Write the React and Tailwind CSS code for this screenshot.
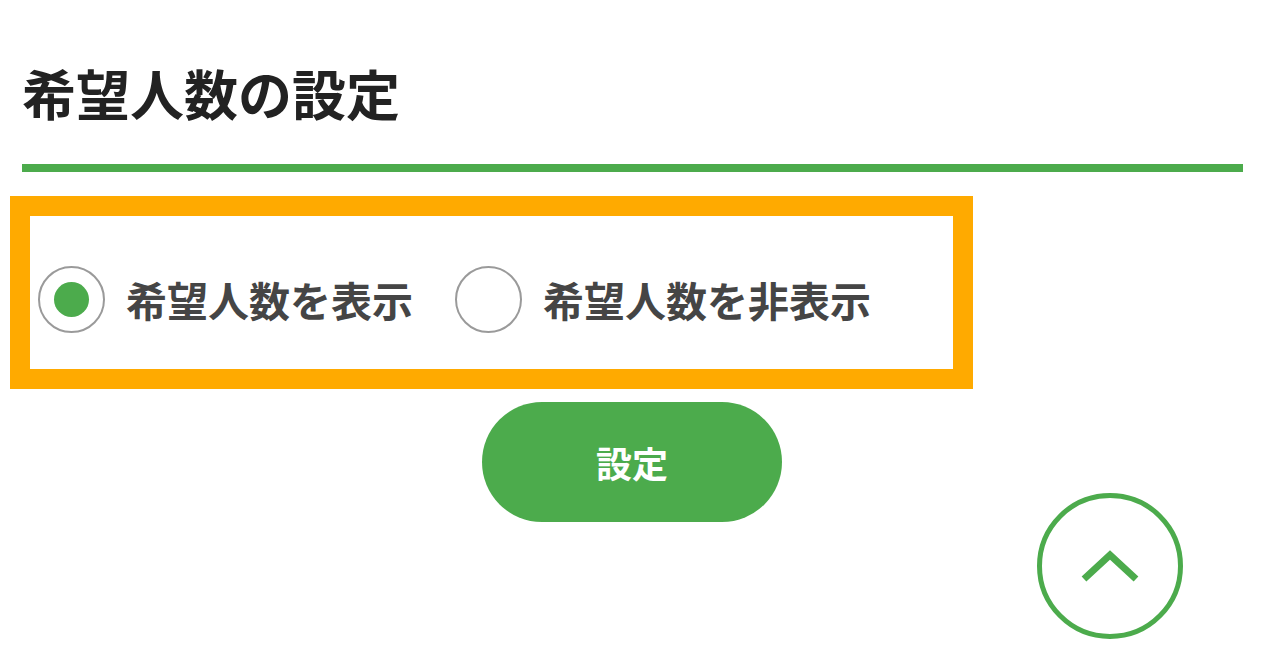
import React, { useState } from 'react';

const Radio = ({ checked, label, onClick }) => (
  <label onClick={onClick} className="flex items-center gap-[21px] cursor-pointer">
    <span className="w-[67px] h-[67px] rounded-full border-2 border-[#9a9a9a] bg-white flex items-center justify-center">
      {checked && <span className="w-[35px] h-[35px] rounded-full bg-[#4cab4c]" />}
    </span>
    <span className="text-[41px] font-bold leading-none text-[#454545]">{label}</span>
  </label>
);

const App = () => {
  const [show, setShow] = useState(true);

  return (
    <div className="relative w-[1264px] h-[668px] bg-white overflow-hidden font-['Noto_Sans_CJK_JP','Noto_Sans',sans-serif]">
      {/* heading */}
      <div className="pl-[22px] pr-[21px] pt-[66px]">
        <h1 className="text-[54px] font-bold leading-none text-[#222]">希望人数の設定</h1>
        <div className="mt-[44px] h-[8px] bg-[#4cab4c]" />
      </div>

      {/* radio group */}
      <div className="ml-[10px] mt-[24px] w-[963px] h-[193px] border-[20px] border-[#ffaa00] flex items-center gap-[42px] pl-[8px] pt-[13px]">
        <Radio checked={show} label="希望人数を表示" onClick={() => setShow(true)} />
        <Radio checked={!show} label="希望人数を非表示" onClick={() => setShow(false)} />
      </div>

      {/* submit */}
      <div className="flex justify-center mt-[13px]">
        <button className="w-[300px] h-[120px] rounded-full bg-[#4cab4c] text-white text-[36px] font-bold leading-none">
          設定
        </button>
      </div>

      {/* page top */}
      <button className="absolute left-[1037px] top-[493px] w-[146px] h-[146px] rounded-full border-[5px] border-[#4cab4c] bg-white flex items-center justify-center">
        <svg width="60" height="36" viewBox="0 0 60 36" fill="none">
          <path d="M4 31 L30 7 L56 31" stroke="#4cab4c" strokeWidth="7" />
        </svg>
      </button>
    </div>
  );
};

export default App;
